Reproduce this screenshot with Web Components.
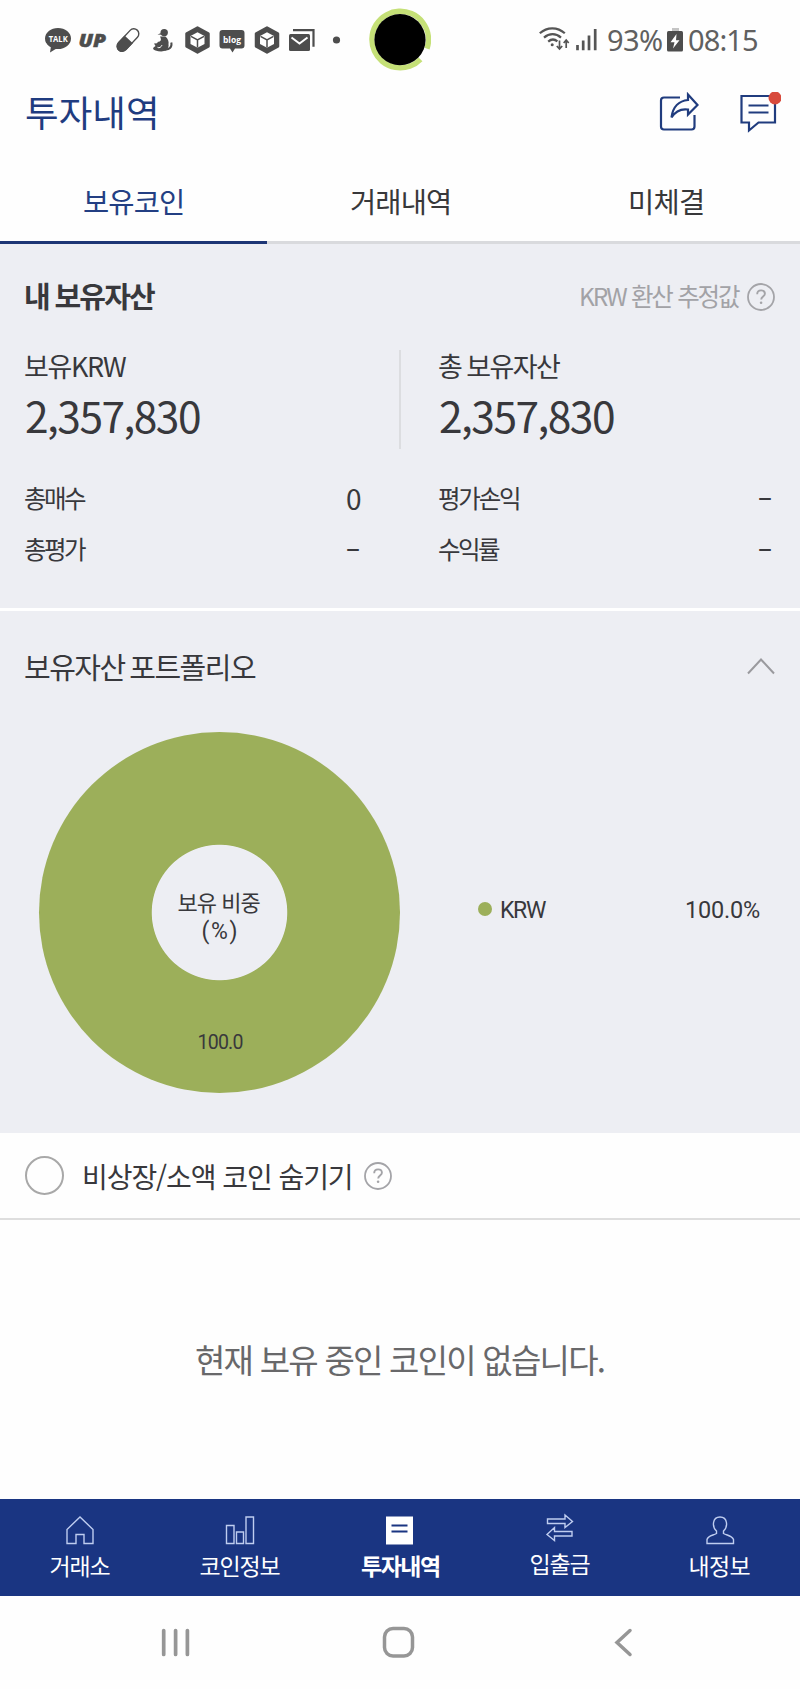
<!DOCTYPE html>
<html lang="ko">
<head>
<meta charset="utf-8">
<title>투자내역</title>
<style>
body{margin:0;background:#fefefe;color:#38383c;font-family:"Noto Sans CJK KR",sans-serif}
</style>
</head>
<body>
<invest-app></invest-app>
<script>
const KR='"Noto Sans CJK KR", sans-serif';
const pen=document.createElement('canvas').getContext('2d');

class Base extends HTMLElement{
  connectedCallback(){
    if(this.shadowRoot)return;
    this.attachShadow({mode:'open'}).innerHTML=this.view();
  }
}

/* One line of text, tracked so that its ink fills the width given in "w". */
class FitText extends HTMLElement{
  connectedCallback(){
    if(this.shadowRoot)return;
    const t=this.getAttribute('text'),w=+this.getAttribute('w'),size=+this.getAttribute('size');
    const weight=this.getAttribute('weight')||400,ws=this.getAttribute('ws')||0;
    const fam=this.getAttribute('font')?`"${this.getAttribute('font')}", ${KR}`:KR;
    pen.font=`${weight} ${size}px ${fam}`;
    const m=pen.measureText(t);
    const bearings=m.width-m.actualBoundingBoxLeft-m.actualBoundingBoxRight;
    this.attachShadow({mode:'open'}).innerHTML=`<style>
      :host{display:block;flex:none;width:${w}px;line-height:1;padding-bottom:.1em;white-space:nowrap;
        font-family:${fam};font-size:${size}px;font-weight:${weight}}
      span{display:inline-block;vertical-align:top;letter-spacing:.01px;word-spacing:${ws}px}
    </style><span></span>`;
    const s=this.shadowRoot.querySelector('span');
    s.textContent=t;
    const ink=s.getBoundingClientRect().width-bearings;
    s.style.letterSpacing=(w-ink)/Math.max(1,[...t].length-1)+'px';
    s.style.marginLeft=m.actualBoundingBoxLeft+'px';
  }
}

class HelpIcon extends Base{
  view(){return `<style>:host{display:block;width:28px;height:28px;flex:none;color:#a4a4a8}svg{display:block}</style>
  <svg width="28" height="28" fill="none" stroke="currentColor"><circle cx="14" cy="14" r="13" stroke-width="1.8"/>
  <path d="M10.2 11.2c0-2.3 1.6-3.8 3.9-3.8s3.8 1.4 3.8 3.3c0 2.8-3.7 3-3.7 5.9" stroke-width="1.9"/><circle cx="14.1" cy="19.8" r="1.3" fill="currentColor" stroke="none"/></svg>`}
}

class StatusBar extends Base{
  view(){
    const hex=x=>`<g transform="translate(${x} 40)"><path d="M0-12.5 11-6.3V6.3L0 12.5-11 6.3V-6.3Z" fill="#4d4d4d" stroke="#4d4d4d" stroke-width="2.5" stroke-linejoin="round"/>
      <path d="M0-7.7 7-4v8L0 7.8-7 4v-8Z" fill="#fff"/><path d="M-6.5-3.6 0 0l6.5-3.6M0 0v7.5" stroke="#4d4d4d" stroke-width="1.5" fill="none"/></g>`;
    return `<style>
    :host{display:grid;grid-template-columns:369px 62px 1fr;height:80px;color:#606060}
    svg{display:block}
    .right{display:flex;align-items:center;padding-left:108px;height:82px}
    .a{margin-left:10px}.b{margin:0 6px 0 5px}
    </style>
    <svg width="369" height="80" fill="#4d4d4d">
      <ellipse cx="58" cy="38.5" rx="13" ry="10.6"/><path d="M51 46 50 52.5 59 47Z"/>
      <text x="58.2" y="42" font-family="Open Sans" font-size="9.5" font-weight="700" fill="#fff" text-anchor="middle" textLength="19" lengthAdjust="spacingAndGlyphs">TALK</text>
      <text x="78.5" y="46.5" font-family="Open Sans" font-size="18" font-style="italic" font-weight="800" textLength="27.5" lengthAdjust="spacingAndGlyphs" stroke="#4d4d4d" stroke-width=".5">UP</text>
      <g transform="translate(128 40) rotate(-47)"><rect x="-13.5" y="-5" width="27" height="10" rx="5" fill="none" stroke="#4d4d4d" stroke-width="1.4"/><path d="M1-5.7V5.7H-8.5a5.7 5.7 0 0 1 0-11.4Z"/></g>
      <circle cx="164.2" cy="32.6" r="3.7"/><path d="M157.5 34.5l5-2v2.3Z"/>
      <path d="M160 36.500h5.500c2.500 2 3.500 5 3 8 .5 1.200-.5 4-2 5.800-3 1.500-7.500 1.300-11 .2-3.300-1.200-3-2.700 0-4.500l-1.500-2.500 3-.2 1-1.500c2.500-.3 4-1.500 2-5.300Z"/>
      <path d="M165 49.500c4.500.3 7.300-2.500 6.300-7" fill="none" stroke="#4d4d4d" stroke-width="2"/>
      <path d="M157.500 47.300c1.800 1.200 3.600-.2 4.500-2.200" fill="none" stroke="#fff" stroke-width="1"/>
      ${hex(197.5)}
      <path d="M222.5 30h19a3 3 0 0 1 3 3v12.5a3 3 0 0 1-3 3H235l-2.500 4-2.500-4h-7.500a3 3 0 0 1-3-3V33a3 3 0 0 1 3-3Z"/>
      <text x="232" y="42.7" font-family="Open Sans" font-size="9" font-weight="700" fill="#fff" text-anchor="middle" textLength="18" lengthAdjust="spacingAndGlyphs">blog</text>
      ${hex(267)}
      <path d="M293 30.2h20.500v16.500" fill="none" stroke="#4d4d4d" stroke-width="2.2"/>
      <rect x="289" y="34" width="21" height="17" rx="1.5"/><path d="M291.500 37.500 299.500 43.500 307.500 37.500" fill="none" stroke="#fff" stroke-width="2"/>
      <circle cx="336.5" cy="40" r="3.6"/>
    </svg>
    <svg width="62" height="80"><path d="M58 48.700A28.300 28.300 0 1 0 51.500 59.300" fill="none" stroke="#c5e077" stroke-width="5.4"/><circle cx="31" cy="39.7" r="25.6"/></svg>
    <div class="right">
      <svg width="59" height="30" fill="none" stroke="#555" stroke-width="2.2">
        <path d="M.8 7.300c7.200-6.700 17.800-6.700 25 0M5 11.600c5.200-4.600 12-4.600 17 0M9.200 15.600c3-2.600 6.500-2.600 9.200-.2"/><circle cx="13.200" cy="18.800" r="1.500" fill="#555" stroke="none"/>
        <path d="M20.500 14.500v8M17.800 20l2.700 3 2.700-3M27.200 22v-7.500M24.700 17l2.500-3 2.500 3" stroke-width="1.7"/>
        <path d="M38.500 19v5.300M44.200 14.500v9.800M50 9.500v14.800M56.200 3v21.300" stroke-width="2.7"/></svg>
      <fit-text class="a" text="93%" w="54" size="29" font="Noto Sans"></fit-text>
      <svg class="b" width="16" height="26"><path d="M5 0h7v4H5Z" fill="#c4c4c4"/><rect y="3" width="16" height="20.5" rx="1.5" fill="#4d4d4d"/><path d="M9.500 6 3.500 14.300h4L6 20.500l6.500-8.300H9Z" fill="#fff"/></svg>
      <fit-text text="08:15" w="68" size="29" font="Noto Sans"></fit-text>
    </div>`}
}

class AppHeader extends Base{
  view(){return `<style>
    :host{display:flex;align-items:center;height:68px;padding:0 19px 0 26px;color:#1f3c80}
    svg{display:block;margin-bottom:3px}.share{margin-left:auto}.chat{margin-left:39px}
    </style>
    <fit-text text="투자내역" w="129" size="36.5"></fit-text>
    <svg class="share" width="40" height="42" fill="none" stroke="#203c7e" stroke-width="2.2">
      <path d="M21 5.500H5a3 3 0 0 0-3 3V34.500a3 3 0 0 0 3 3h27.500a3 3 0 0 0 3-3V23"/><path d="M29 2.500 38.500 13 29 22.500V17.500C22 16.500 16.500 19 12.500 25.500 13.800 15 20 8.800 29 8Z"/></svg>
    <svg class="chat" width="43" height="42" fill="none" stroke="#203c7e" stroke-width="2.2">
      <path d="M3.500 4H37V30.500H20.500L11 38.500V30.500H3.500Z"/><path d="M10.500 13.500h20M10.500 20.500h20"/><circle cx="37" cy="6" r="6.500" fill="#d84a3c" stroke="none"/></svg>`}
}

class TabBar extends Base{
  view(){return `<style>
    :host{display:grid;grid-template-columns:267px 1fr 267px;height:96px;color:#38383a}
    div{display:flex;justify-content:center;align-items:center;padding-top:16px;box-sizing:border-box;border-bottom:3px solid #d9dadd}
    .on{color:#233f83;border-color:#1d3675}
    </style>
    <div class="on"><fit-text text="보유코인" w="99" size="28.5"></fit-text></div>
    <div><fit-text text="거래내역" w="98" size="28.5"></fit-text></div>
    <div><fit-text text="미체결" w="73" size="28.5"></fit-text></div>`}
}

class AssetColumn extends Base{
  view(){
    const a=n=>this.getAttribute(n);
    const val=v=>v==='0'?`<fit-text text="0" w="14" size="28"></fit-text>`:`<fit-text class="dash" text="–" w="13" size="26" weight="500"></fit-text>`;
    return `<style>:host{display:block}
    .head{height:36px;display:flex;align-items:center;margin-top:-1px}.num{height:65px;display:flex;align-items:center;padding-left:1px}
    .gap{height:24px}.row{height:51px;display:flex;align-items:center;justify-content:space-between;padding-right:var(--end,0)}
    .dash{margin:0 1px 6px 0}</style>
    <div class="head"><fit-text text="${a('label')}" w="${a('lw')}" size="27" ws="-1"></fit-text></div>
    <div class="num"><fit-text text="2,357,830" w="174" size="42.5"></fit-text></div>
    <div class="gap"></div>
    <div class="row"><fit-text text="${a('l1')}" w="${a('w1')}" size="24.5"></fit-text>${val(a('v1'))}</div>
    <div class="row"><fit-text text="${a('l2')}" w="61" size="24.5"></fit-text>${val('-')}</div>`}
}

class AssetSummary extends Base{
  view(){return `<style>
    :host{display:block;height:367px;box-sizing:border-box;background:#edeef3;border-bottom:3px solid #fff;padding:30px 25px 0}
    .top{display:flex;align-items:center;height:46px;padding-left:1px}
    .top .k{margin-left:auto;color:#a2a2a6;margin-right:7px}
    .grid{display:grid;grid-template-columns:336px 1fr 336px;padding-top:30px}
    i{display:block;width:2px;height:99px;background:#dcdde0;margin-left:38px}
    .r{--end:2px}
    </style>
    <div class="top"><fit-text text="내 보유자산" w="129" size="29" weight="700" ws="-.5"></fit-text><fit-text class="k" text="KRW 환산 추정값" w="159" size="24.5" ws=".8"></fit-text><help-icon></help-icon></div>
    <div class="grid">
      <asset-column label="보유KRW" lw="101" l1="총매수" w1="61" v1="0" l2="총평가"></asset-column><i></i>
      <asset-column class="r" label="총 보유자산" lw="121" l1="평가손익" w1="80" v1="-" l2="수익률"></asset-column>
    </div>`}
}

class AssetPortfolio extends Base{
  view(){return `<style>
    :host{display:block;height:522px;background:#edeef3;box-sizing:border-box;padding:38px 25px 0}
    .top{display:flex;align-items:center;justify-content:space-between;height:38px}
    svg{display:block;margin-bottom:4px}
    .body{display:grid;grid-template-columns:361px 1fr;margin:45px 15px 0 14px}
    .donut{box-sizing:border-box;width:361px;height:361px;border-radius:50%;display:grid;justify-items:center;align-items:center;background:radial-gradient(circle,transparent 67.3px,#9caf5a 68.2px);grid-template-rows:156px 28px 33px 1fr}
    .pct{padding-top:45px;margin-left:2px}
    .legend{display:flex;align-items:center;padding:0 0 8px 78px;width:282px}
    .dot{width:14px;height:14px;border-radius:50%;background:#9caf5a;margin-right:9px}
    .legend fit-text{padding-top:6px}
    .v{margin-left:auto}
    </style>
    <div class="top"><fit-text text="보유자산 포트폴리오" w="231" size="29" ws="-2"></fit-text>
      <svg width="28" height="18" fill="none" stroke="#9a9a9e" stroke-width="2"><path d="M1 16.500 14 2.500 27 16.500"/></svg></div>
    <div class="body">
      <div class="donut"><span></span><fit-text text="보유 비중" w="82" size="22"></fit-text><fit-text text="(%)" w="34" size="23" font="Roboto"></fit-text><fit-text class="pct" text="100.0" w="44" size="19.5" font="Roboto"></fit-text></div>
      <div class="legend"><span class="dot"></span><fit-text text="KRW" w="45" size="23" font="Roboto"></fit-text><fit-text class="v" text="100.0%" w="74" size="23.5" font="Roboto"></fit-text></div>
    </div>`}
}

class HideFilter extends Base{
  view(){return `<style>
    :host{display:flex;align-items:center;height:87px;box-sizing:border-box;border-bottom:2px solid #dedede;padding-left:25px}
    .radio{box-sizing:border-box;width:39px;height:39px;border-radius:50%;border:2px solid #a8a8a8;margin-right:20px}
    fit-text{padding-top:3px}
    help-icon{margin-left:13px}
    </style>
    <span class="radio"></span><fit-text text="비상장/소액 코인 숨기기" w="267" size="28"></fit-text><help-icon></help-icon>`}
}

class EmptyState extends Base{
  view(){return `<style>:host{display:flex;align-items:center;justify-content:center;height:279px;padding-top:4px;box-sizing:border-box;color:#68686a}</style>
    <fit-text text="현재 보유 중인 코인이 없습니다." w="408" size="33"></fit-text>`}
}

class NavItem extends Base{
  view(){return `<style>
    :host{display:flex;flex-direction:column;align-items:center;padding-top:var(--top,16px)}
    </style><slot></slot>
    <fit-text text="${this.getAttribute('label')}" w="${this.getAttribute('w')}" size="23" weight="${this.getAttribute('weight')||400}"></fit-text>`}
}

class BottomNav extends Base{
  view(){return `<style>
    :host{display:grid;grid-template-columns:repeat(5,1fr);height:97px;background:#1a3582;color:#fff}
    svg{display:block;margin-bottom:7px}
    .up{--top:14px}
    </style>
    <nav-item label="거래소" w="59"><svg width="30" height="32" fill="none" stroke="#bfcdf0" stroke-width="1.4"><path d="M2 28.500V14.500L15 2 28 14.500V28.500H19V19.500H11V28.500Z"/></svg></nav-item>
    <nav-item label="코인정보" w="79"><svg width="30" height="32" fill="none" stroke="#bfcdf0" stroke-width="1.4"><path d="M1.500 10.500H9V28.500H1.500ZM11.500 17H18.500V28.500H11.500ZM21 2H28.500V28.500H21Z"/></svg></nav-item>
    <nav-item label="투자내역" w="78" weight="700"><svg width="30" height="32"><path d="M1 1.500H28V29.500H1Z" fill="#fff"/><path d="M6.500 10.500H22.500M6.500 16.500H22.500" stroke="#1a3582" stroke-width="1.8"/></svg></nav-item>
    <nav-item class="up" label="입출금" w="59"><svg width="30" height="32" fill="none" stroke="#bfcdf0" stroke-width="1.4"><path d="M2.500 6H20V2L27.500 8.500 20 14.500V10.500H2.500ZM27 18.500H9.500V14.500L2 21.500 9.500 27.500V23H27Z"/></svg></nav-item>
    <nav-item label="내정보" w="59"><svg width="30" height="32" fill="none" stroke="#bfcdf0" stroke-width="1.4"><path d="M2 28.500V24.500C3 20.500 8 20.500 11.500 18.500V16C7 12 7 2 15 2S23 12 18.500 16V18.500C22 20.500 27 20.500 28.500 24.500V28.500Z"/></svg></nav-item>`}
}

class SystemNav extends Base{
  view(){return `<style>:host{display:grid;grid-template-columns:222px 1fr 222px;align-items:center;height:93px;padding-bottom:2px;box-sizing:border-box}
    svg{display:block}.l{margin-left:160px}.m{margin-left:160px}.r{margin-left:36px}</style>
    <svg class="l" width="32" height="32" stroke="#969696" stroke-width="3.7" stroke-linecap="round"><path d="M3.700 4.500V28.500M15.600 4.500V28.500M27.400 4.500V28.500"/></svg>
    <svg class="m" width="34" height="34" fill="none" stroke="#969696" stroke-width="3.5"><rect x="2.5" y="3.5" width="28" height="27.5" rx="8.5"/></svg>
    <svg class="r" width="19" height="32" fill="none" stroke="#969696" stroke-width="3.5" stroke-linecap="round"><path d="M16 4.500 3 16.500 16 28.500"/></svg>`}
}

class InvestApp extends Base{
  view(){return `<style>:host{display:block;width:800px;height:1689px;overflow:hidden}</style>
    <status-bar></status-bar><app-header></app-header><tab-bar></tab-bar>
    <asset-summary></asset-summary><asset-portfolio></asset-portfolio>
    <hide-filter></hide-filter><empty-state></empty-state>
    <bottom-nav></bottom-nav><system-nav></system-nav>`}
}

for(const [n,c] of Object.entries({'fit-text':FitText,'help-icon':HelpIcon,'status-bar':StatusBar,'app-header':AppHeader,'tab-bar':TabBar,'asset-column':AssetColumn,'asset-summary':AssetSummary,'asset-portfolio':AssetPortfolio,'hide-filter':HideFilter,'empty-state':EmptyState,'nav-item':NavItem,'bottom-nav':BottomNav,'system-nav':SystemNav,'invest-app':InvestApp}))customElements.define(n,c);
</script>
</body>
</html>
